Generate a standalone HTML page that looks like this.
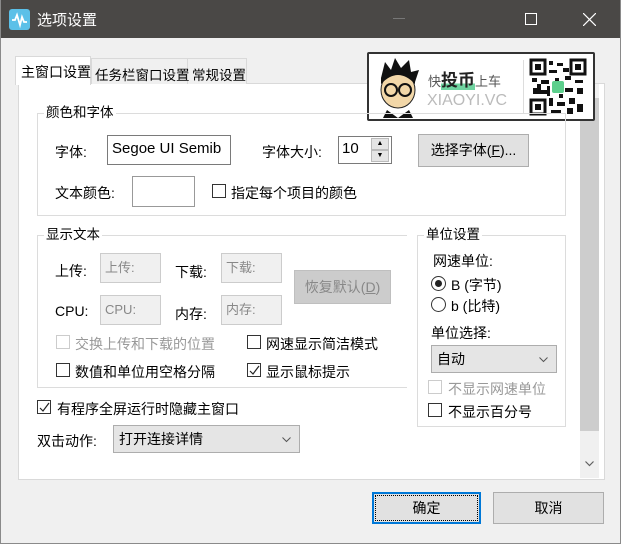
<!DOCTYPE html>
<html><head><meta charset="utf-8"><style>
*{box-sizing:border-box;margin:0;padding:0}
body{width:621px;height:544px;background:#f0f0f0;font-family:"Liberation Sans","Noto Sans CJK SC",sans-serif;font-size:13px;color:#000;position:relative;overflow:hidden}
.a{position:absolute;white-space:nowrap}
.win{position:absolute;left:0;top:0;width:621px;height:544px;border:1px solid #8a8a8a;border-top:none}
.title{position:absolute;left:0;top:0;width:621px;height:38px;background:#4a4846;color:#fff}
.grp{position:absolute;border:1px solid #dcdcdc}
.lg{position:absolute;background:#fff;padding:0 2px;top:-10px;left:6px;line-height:18px;font-size:13.5px}
.cb{position:absolute;width:14px;height:14px;border:1px solid #333;background:#fff}
.cb.dis{border-color:#ccc}
.tb{position:absolute;border:1px solid #7a7a7a;background:#fff}
.dtb{position:absolute;border:1px solid #ccc;background:#f0f0f0;color:#888;padding:4px 4px;line-height:20px}
.btn{position:absolute;background:#e1e1e1;border:1px solid #adadad;text-align:center}
.combo{position:absolute;background:#e5e5e5;border:1px solid #adadad;padding-left:5px}
.chk{position:absolute;left:1px;top:1px}
</style></head><body>
<div class="title">
  <div class="a" style="left:9px;top:9px;width:21px;height:21px;background:#5bc0e8;border-radius:3px"><svg width="21" height="21"><path d="M3 11h3l2-5 3 10 2-8 2 5h3" stroke="#fff" stroke-width="1.8" fill="none"/></svg></div>
  <div class="a" style="left:37px;top:9px;font-size:15px">选项设置</div>
  <div class="a" style="left:393px;top:18px;width:12px;height:1px;background:#777"></div>
  <div class="a" style="left:525px;top:13px;width:12px;height:12px;border:1px solid #fff"></div>
  <svg class="a" style="left:583px;top:13px" width="13" height="13"><path d="M0 0L13 13M13 0L0 13" stroke="#fff" stroke-width="1.2"/></svg>
</div>
<div class="win"></div>
<!-- tabs -->
<div class="a" style="left:18px;top:83px;width:587px;height:397px;background:#fff;border:1px solid #d9d9d9"></div>
<div class="a" style="left:91px;top:58px;width:156px;height:26px;background:#f0f0f0;border:1px solid #d9d9d9;border-bottom:none"></div>
<div class="a" style="left:187px;top:58px;width:60px;height:26px;border-left:1px solid #d9d9d9"></div>
<div class="a" style="left:15px;top:56px;width:76px;height:29px;background:#fff;border:1px solid #d9d9d9;border-bottom:none"></div>
<div class="a" style="left:21px;top:62px;font-size:14px">主窗口设置</div>
<div class="a" style="left:95px;top:64px;font-size:13.5px">任务栏窗口设置</div>
<div class="a" style="left:192px;top:64px;font-size:13.5px">常规设置</div>
<!-- scrollbar -->
<div class="a" style="left:580px;top:84px;width:19px;height:394px;background:#f0f0f0"></div>
<div class="a" style="left:580px;top:98px;width:19px;height:333px;background:#cdcdcd"></div>
<svg class="a" style="left:585px;top:461px" width="9" height="6"><path d="M0.5 0.5L4.5 4.5L8.5 0.5" stroke="#606060" fill="none" stroke-width="1.2"/></svg>
<!-- banner -->
<div class="a" style="left:367px;top:52px;width:228px;height:69px;background:#fff;border:2px solid #333;border-radius:2px">
  <svg class="a" style="left:4px;top:2px" width="50" height="62"><path d="M8 22 L12 6 L18 14 L22 2 L28 12 L36 4 L38 16 L46 14 L42 26 Z" fill="#111"/><ellipse cx="25" cy="34" rx="17" ry="18" fill="#f2d7a8" stroke="#222"/><path d="M8 28 Q25 10 42 28 L42 22 Q25 4 8 22Z" fill="#111"/><circle cx="18" cy="34" r="6" fill="none" stroke="#111" stroke-width="2"/><circle cx="32" cy="34" r="6" fill="none" stroke="#111" stroke-width="2"/><path d="M14 54 L25 62 L36 54 L40 62 L10 62Z" fill="#111"/></svg>
  <div class="a" style="left:59px;top:12px;font-size:13px;color:#555">快<span style="font-size:17px;color:#222;font-weight:bold;background:linear-gradient(transparent 65%,#6fd3a0 65%)">投币</span>上车</div>
  <div class="a" style="left:58px;top:38px;font-size:16px;color:#bbb">XIAOYI.VC</div>
  <div class="a" style="left:154px;top:6px;width:1px;height:54px;background:#ddd"></div>
  <svg class="a" style="left:160px;top:4px" width="58" height="58"><rect width="58" height="58" fill="#fff"/><path d="M2 2h14v14H2zM42 2h14v14H42zM2 42h14v14H2z" fill="none" stroke="#111" stroke-width="3"/><rect x="6" y="6" width="6" height="6" fill="#111"/><rect x="46" y="6" width="6" height="6" fill="#111"/><rect x="6" y="46" width="6" height="6" fill="#111"/><path d="M20 3h4v4h-4zM28 5h6v3h-6zM20 12h8v3h-8zM3 20h5v4H3zM12 22h8v4h-8zM26 20h4v6h-4zM36 18h6v4h-6zM46 22h8v3h-8zM4 30h4v6H4zM12 32h6v4h-6zM36 30h8v4h-8zM48 30h6v6h-6zM20 40h4v8h-4zM28 44h8v4h-8zM40 40h6v6h-6zM48 46h6v8h-6zM22 52h10v4H22zM38 50h6v6h-6zM34 10h6v4h-6zM18 28h3v10h-3zM30 36h4v4h-4zM8 26h4v10H8z" fill="#111"/><rect x="23" y="23" width="12" height="12" rx="2" fill="#5ccf8c"/></svg>
</div>
<!-- 颜色和字体 -->
<div class="grp" style="left:37px;top:113px;width:529px;height:103px"><div class="lg">颜色和字体</div></div>
<div class="a" style="left:55px;top:142px;font-size:14px">字体:</div>
<div class="tb" style="left:107px;top:135px;width:124px;height:30px"><span class="a" style="left:4px;top:4px;font-size:15px">Segoe UI Semib</span></div>
<div class="a" style="left:262px;top:142px;font-size:14px">字体大小:</div>
<div class="tb" style="left:338px;top:136px;width:54px;height:28px"><span class="a" style="left:3px;top:3px;font-size:15px">10</span>
 <div class="a" style="left:32px;top:1px;width:18px;height:12px;background:#e5e5e5;border:1px solid #bbb;font-size:7px;text-align:center;line-height:10px">▲</div>
 <div class="a" style="left:32px;top:13px;width:18px;height:12px;background:#e5e5e5;border:1px solid #bbb;font-size:7px;text-align:center;line-height:10px">▼</div></div>
<div class="btn" style="left:418px;top:134px;width:111px;height:33px;line-height:31px;font-size:14px">选择字体(<u>F</u>)...</div>
<div class="a" style="left:55px;top:183px;font-size:14px">文本颜色:</div>
<div class="a" style="left:132px;top:176px;width:63px;height:31px;border:1px solid #999;background:#fff"></div>
<div class="cb" style="left:212px;top:184px"></div>
<div class="a" style="left:231px;top:183px;font-size:14px">指定每个项目的颜色</div>
<!-- 显示文本 -->
<div class="grp" style="left:37px;top:235px;width:370px;height:153px;border-right:none"><div class="lg">显示文本</div></div>
<div class="a" style="left:55px;top:261px;font-size:14px">上传:</div>
<div class="dtb" style="left:100px;top:253px;width:61px;height:30px">上传:</div>
<div class="a" style="left:175px;top:262px;font-size:14px">下载:</div>
<div class="dtb" style="left:221px;top:253px;width:61px;height:30px">下载:</div>
<div class="btn" style="left:294px;top:270px;width:97px;height:34px;line-height:32px;color:#888;background:#ccc;border-color:#bfbfbf;font-size:14px">恢复默认(<u>D</u>)</div>
<div class="a" style="left:55px;top:303px;font-size:14px">CPU:</div>
<div class="dtb" style="left:100px;top:295px;width:61px;height:30px">CPU:</div>
<div class="a" style="left:175px;top:304px;font-size:14px">内存:</div>
<div class="dtb" style="left:221px;top:295px;width:61px;height:30px">内存:</div>
<div class="cb dis" style="left:56px;top:335px"></div><div class="a" style="left:75px;top:334px;color:#999;font-size:14px">交换上传和下载的位置</div>
<div class="cb" style="left:247px;top:335px"></div><div class="a" style="left:266px;top:334px;font-size:14px">网速显示简洁模式</div>
<div class="cb" style="left:56px;top:363px"></div><div class="a" style="left:75px;top:362px;font-size:14px">数值和单位用空格分隔</div>
<div class="cb" style="left:247px;top:363px"><svg class="chk" width="11" height="11"><path d="M1 6L4 9L10 1" stroke="#222" fill="none" stroke-width="1.2"/></svg></div><div class="a" style="left:266px;top:362px;font-size:14px">显示鼠标提示</div>
<div class="cb" style="left:37px;top:400px"><svg class="chk" width="11" height="11"><path d="M1 6L4 9L10 1" stroke="#222" fill="none" stroke-width="1.2"/></svg></div><div class="a" style="left:57px;top:399px;font-size:14px">有程序全屏运行时隐藏主窗口</div>
<div class="a" style="left:37px;top:431px;font-size:14px">双击动作:</div>
<div class="combo" style="left:113px;top:425px;width:187px;height:28px;line-height:26px;font-size:14px">打开连接详情<svg class="a" style="right:8px;top:11px" width="9" height="6"><path d="M0.5 0.5L4.5 4.5L8.5 0.5" stroke="#555" fill="none"/></svg></div>
<!-- 单位设置 -->
<div class="grp" style="left:417px;top:235px;width:149px;height:192px"><div class="lg">单位设置</div></div>
<div class="a" style="left:433px;top:251px;font-size:14px">网速单位:</div>
<div class="a" style="left:431px;top:276px;width:15px;height:15px;border:1px solid #333;border-radius:50%;background:#fff"><div class="a" style="left:3px;top:3px;width:7px;height:7px;border-radius:50%;background:#222"></div></div>
<div class="a" style="left:451px;top:275px;font-size:14px">B (字节)</div>
<div class="a" style="left:431px;top:297px;width:15px;height:15px;border:1px solid #333;border-radius:50%;background:#fff"></div>
<div class="a" style="left:451px;top:296px;font-size:14px">b (比特)</div>
<div class="a" style="left:431px;top:323px;font-size:14px">单位选择:</div>
<div class="combo" style="left:431px;top:345px;width:126px;height:28px;line-height:26px;font-size:14px">自动<svg class="a" style="right:8px;top:11px" width="9" height="6"><path d="M0.5 0.5L4.5 4.5L8.5 0.5" stroke="#555" fill="none"/></svg></div>
<div class="cb dis" style="left:428px;top:380px"></div><div class="a" style="left:448px;top:379px;color:#999;font-size:14px">不显示网速单位</div>
<div class="cb" style="left:428px;top:403px"></div><div class="a" style="left:448px;top:402px;font-size:14px">不显示百分号</div>
<!-- buttons -->
<div class="btn" style="left:372px;top:492px;width:109px;height:32px;border:2px solid #0078d7;line-height:28px;font-size:14px"><div class="a" style="left:1px;top:1px;right:1px;bottom:1px;border:1px dotted #000"></div>确定</div>
<div class="btn" style="left:493px;top:492px;width:111px;height:32px;line-height:30px;font-size:14px">取消</div>
</body></html>
